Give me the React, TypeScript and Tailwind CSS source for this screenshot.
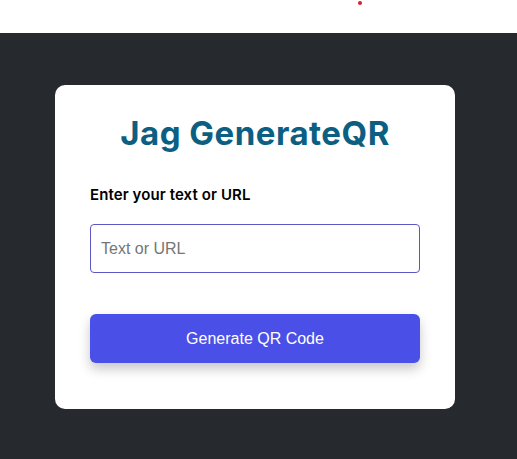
import { useState } from "react";

const App = () => {
  const [text, setText] = useState<string>("");

  return (
    <div className="w-full min-h-[459px] flex flex-col bg-[#26292e]">
      <div className="relative h-[33px] w-full bg-white">
        <span className="absolute left-[358px] top-[1px] w-[4px] h-[4px] rounded-full bg-[#d42030]" />
      </div>
      <div className="flex justify-center pt-[52px] pb-[50px] pr-[7px]">
        <div className="w-[400px] bg-white rounded-[10px] px-[35px] pt-[24px] pb-[46px] flex flex-col">
          <h1 className="text-center font-['Inter',sans-serif] font-bold text-[33px] leading-[48px] tracking-[0.5px] text-[#0c5f82]">
            Jag GenerateQR
          </h1>
          <label className="mt-[27px] font-['Inter',sans-serif] font-semibold text-[15px] leading-[21px] tracking-[0.1px] text-black">
            Enter your text or URL
          </label>
          <input
            type="text"
            value={text}
            onChange={(e) => setText(e.target.value)}
            placeholder="Text or URL"
            className="mt-[19px] h-[49px] w-full rounded-[4px] border border-[#5b57c4] px-[10px] font-['Liberation_Sans',Arial,sans-serif] text-[16px] text-black placeholder:text-[#767676] outline-none"
          />
          <button className="mt-[41px] h-[49px] w-full rounded-[6px] bg-[#4a4fe7] font-['Liberation_Sans',Arial,sans-serif] text-[16px] text-white shadow-[0_6px_12px_rgba(0,0,0,0.22)]">
            Generate QR Code
          </button>
        </div>
      </div>
    </div>
  );
};

export default App;
